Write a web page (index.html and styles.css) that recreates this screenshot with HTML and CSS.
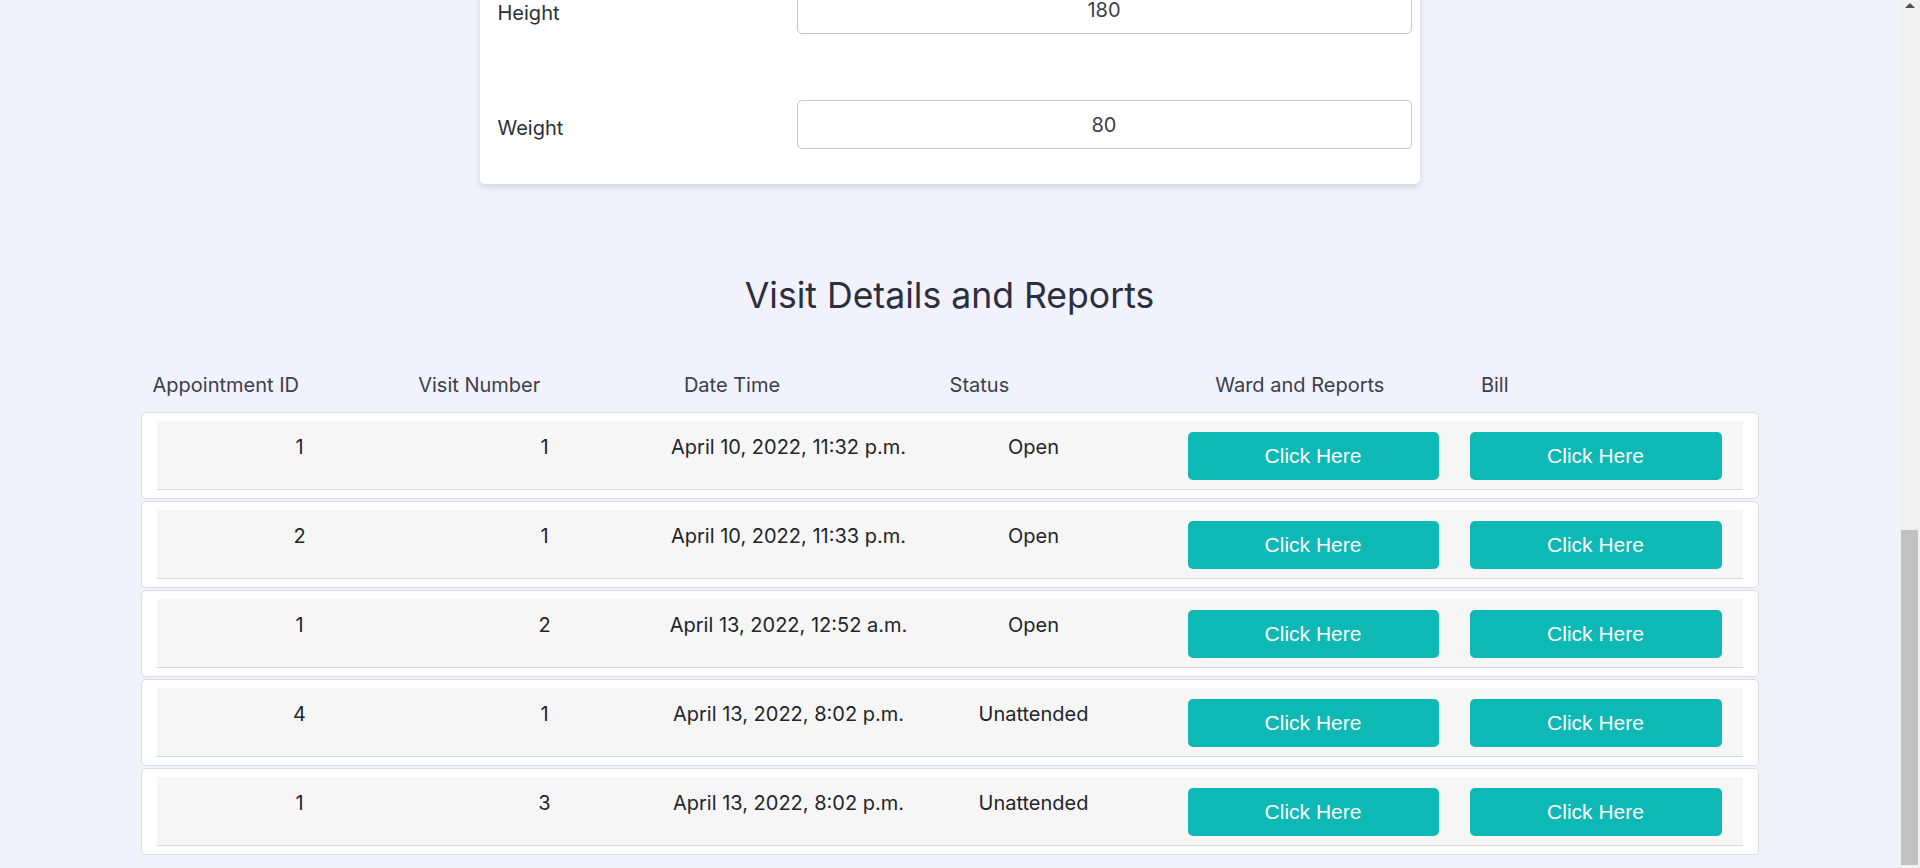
FILE: index.html
```html
<!DOCTYPE html>
<html lang="en">
<head>
<meta charset="utf-8">
<title>Visit Details and Reports</title>
<link rel="stylesheet" href="styles.css">
</head>
<body>
<div class="page">
  <main class="main">
    <section class="vitals-card">
      <div class="field-row">
        <label class="field-label">Height</label>
        <input class="field-input" type="text" value="180">
      </div>
      <div class="field-row">
        <label class="field-label">Weight</label>
        <input class="field-input" type="text" value="80">
      </div>
    </section>

    <section class="visits">
      <h3 class="visits-title">Visit Details and Reports</h3>
      <div class="visits-head">
        <div>Appointment ID</div>
        <div>Visit Number</div>
        <div>Date Time</div>
        <div>Status</div>
        <div>Ward and Reports</div>
        <div>Bill</div>
      </div>

      <div class="visit-card">
        <div class="visit-row">
          <div class="cell">1</div>
          <div class="cell">1</div>
          <div class="cell">April 10, 2022, 11:32 p.m.</div>
          <div class="cell">Open</div>
          <div class="btn-cell btn-cell-ward"><button class="btn">Click Here</button></div>
          <div class="btn-cell btn-cell-bill"><button class="btn">Click Here</button></div>
        </div>
      </div>
      <div class="visit-card">
        <div class="visit-row">
          <div class="cell">2</div>
          <div class="cell">1</div>
          <div class="cell">April 10, 2022, 11:33 p.m.</div>
          <div class="cell">Open</div>
          <div class="btn-cell btn-cell-ward"><button class="btn">Click Here</button></div>
          <div class="btn-cell btn-cell-bill"><button class="btn">Click Here</button></div>
        </div>
      </div>
      <div class="visit-card">
        <div class="visit-row">
          <div class="cell">1</div>
          <div class="cell">2</div>
          <div class="cell">April 13, 2022, 12:52 a.m.</div>
          <div class="cell">Open</div>
          <div class="btn-cell btn-cell-ward"><button class="btn">Click Here</button></div>
          <div class="btn-cell btn-cell-bill"><button class="btn">Click Here</button></div>
        </div>
      </div>
      <div class="visit-card">
        <div class="visit-row">
          <div class="cell">4</div>
          <div class="cell">1</div>
          <div class="cell">April 13, 2022, 8:02 p.m.</div>
          <div class="cell">Unattended</div>
          <div class="btn-cell btn-cell-ward"><button class="btn">Click Here</button></div>
          <div class="btn-cell btn-cell-bill"><button class="btn">Click Here</button></div>
        </div>
      </div>
      <div class="visit-card">
        <div class="visit-row">
          <div class="cell">1</div>
          <div class="cell">3</div>
          <div class="cell">April 13, 2022, 8:02 p.m.</div>
          <div class="cell">Unattended</div>
          <div class="btn-cell btn-cell-ward"><button class="btn">Click Here</button></div>
          <div class="btn-cell btn-cell-bill"><button class="btn">Click Here</button></div>
        </div>
      </div>
    </section>
  </main>

  <div class="scrollbar">
    <div class="scroll-arrow"></div>
    <div class="scroll-track"></div>
    <div class="scroll-thumb"></div>
    <div class="scroll-end"></div>
  </div>
</div>
</body>
</html>
```

FILE: styles.css
```css
* {
  box-sizing: border-box;
}

html, body {
  margin: 0;
  padding: 0;
}

body {
  background: #f1f2fb;
  font-family: Inter, "Noto Sans", sans-serif;
  font-size: 20px;
  line-height: 30px;
  color: #212529;
}

.page {
  display: flex;
  width: 1920px;
  height: 868px;
  overflow: hidden;
}

.main {
  flex: 1;
  min-width: 0;
  display: flex;
  flex-direction: column;
  align-items: center;
}

/* ---------- vitals card ---------- */
.vitals-card {
  width: 940px;
  margin-top: -45px;
  padding: 30px 8px 35px 18px;
  background: #ffffff;
  border-radius: 5px;
  box-shadow: 0 3px 6px rgba(60, 64, 100, 0.16);
  display: flex;
  flex-direction: column;
  gap: 66px;
}

.field-row {
  display: grid;
  grid-template-columns: 299px 615px;
  align-items: center;
}

.field-label {
  padding-top: 6px;
  color: #2b2f3a;
}

.field-input {
  height: 49px;
  width: 100%;
  border: 1px solid #c2c6d3;
  border-radius: 5px;
  background: #fff;
  text-align: center;
  font-family: Inter, "Noto Sans", sans-serif;
  font-size: 20px;
  color: #3a3f48;
  padding: 0 12px;
}

/* ---------- visits ---------- */
.visits {
  width: 1618px;
  display: flex;
  flex-direction: column;
}

.visits-title {
  margin: 91px 0 53px;
  text-align: center;
  font-size: 35.6px;
  line-height: 42px;
  font-weight: 400;
  color: #2b2f3e;
}

.visits-head {
  display: grid;
  grid-template-columns: repeat(6, 265.7px);
  padding-left: 12px;
  margin-bottom: 12px;
  color: #3b404c;
}

.visit-card {
  background: #fff;
  border: 1px solid #dcdde3;
  border-radius: 5px;
  padding: 8px 15px;
  margin-bottom: 2px;
}

.visit-row {
  display: grid;
  grid-template-columns: 286px 204px 284px 206px 318px 288px;
  height: 69px;
  background: #f6f6f6;
  border-bottom: 1px solid #d9d9d9;
}

.cell {
  padding-top: 11px;
  text-align: center;
  color: #22252b;
}

.btn-cell {
  display: flex;
  align-items: center;
  padding-top: 2px;
}

.btn-cell-ward {
  justify-content: flex-end;
  padding-right: 16px;
}

.btn-cell-bill {
  justify-content: flex-start;
  padding-left: 15px;
}

.btn {
  height: 48px;
  border: none;
  border-radius: 5px;
  background: #0db8b5;
  color: #ffffff;
  font-family: "Liberation Sans", Arial, sans-serif;
  font-size: 21px;
  cursor: pointer;
}

.btn-cell-ward .btn {
  width: 251px;
}

.btn-cell-bill .btn {
  width: 252px;
}

/* ---------- scrollbar ---------- */
.scrollbar {
  width: 21px;
  flex: none;
  background: #f1f1f1;
  display: flex;
  flex-direction: column;
  align-items: center;
}

.scroll-arrow {
  margin-top: 3px;
  width: 0;
  height: 0;
  border-left: 5px solid transparent;
  border-right: 5px solid transparent;
  border-bottom: 5px solid #505050;
}

.scroll-track {
  flex: 1;
}

.scroll-thumb {
  width: 17px;
  height: 335px;
  background: #c1c1c1;
}

.scroll-end {
  height: 3px;
}
```
